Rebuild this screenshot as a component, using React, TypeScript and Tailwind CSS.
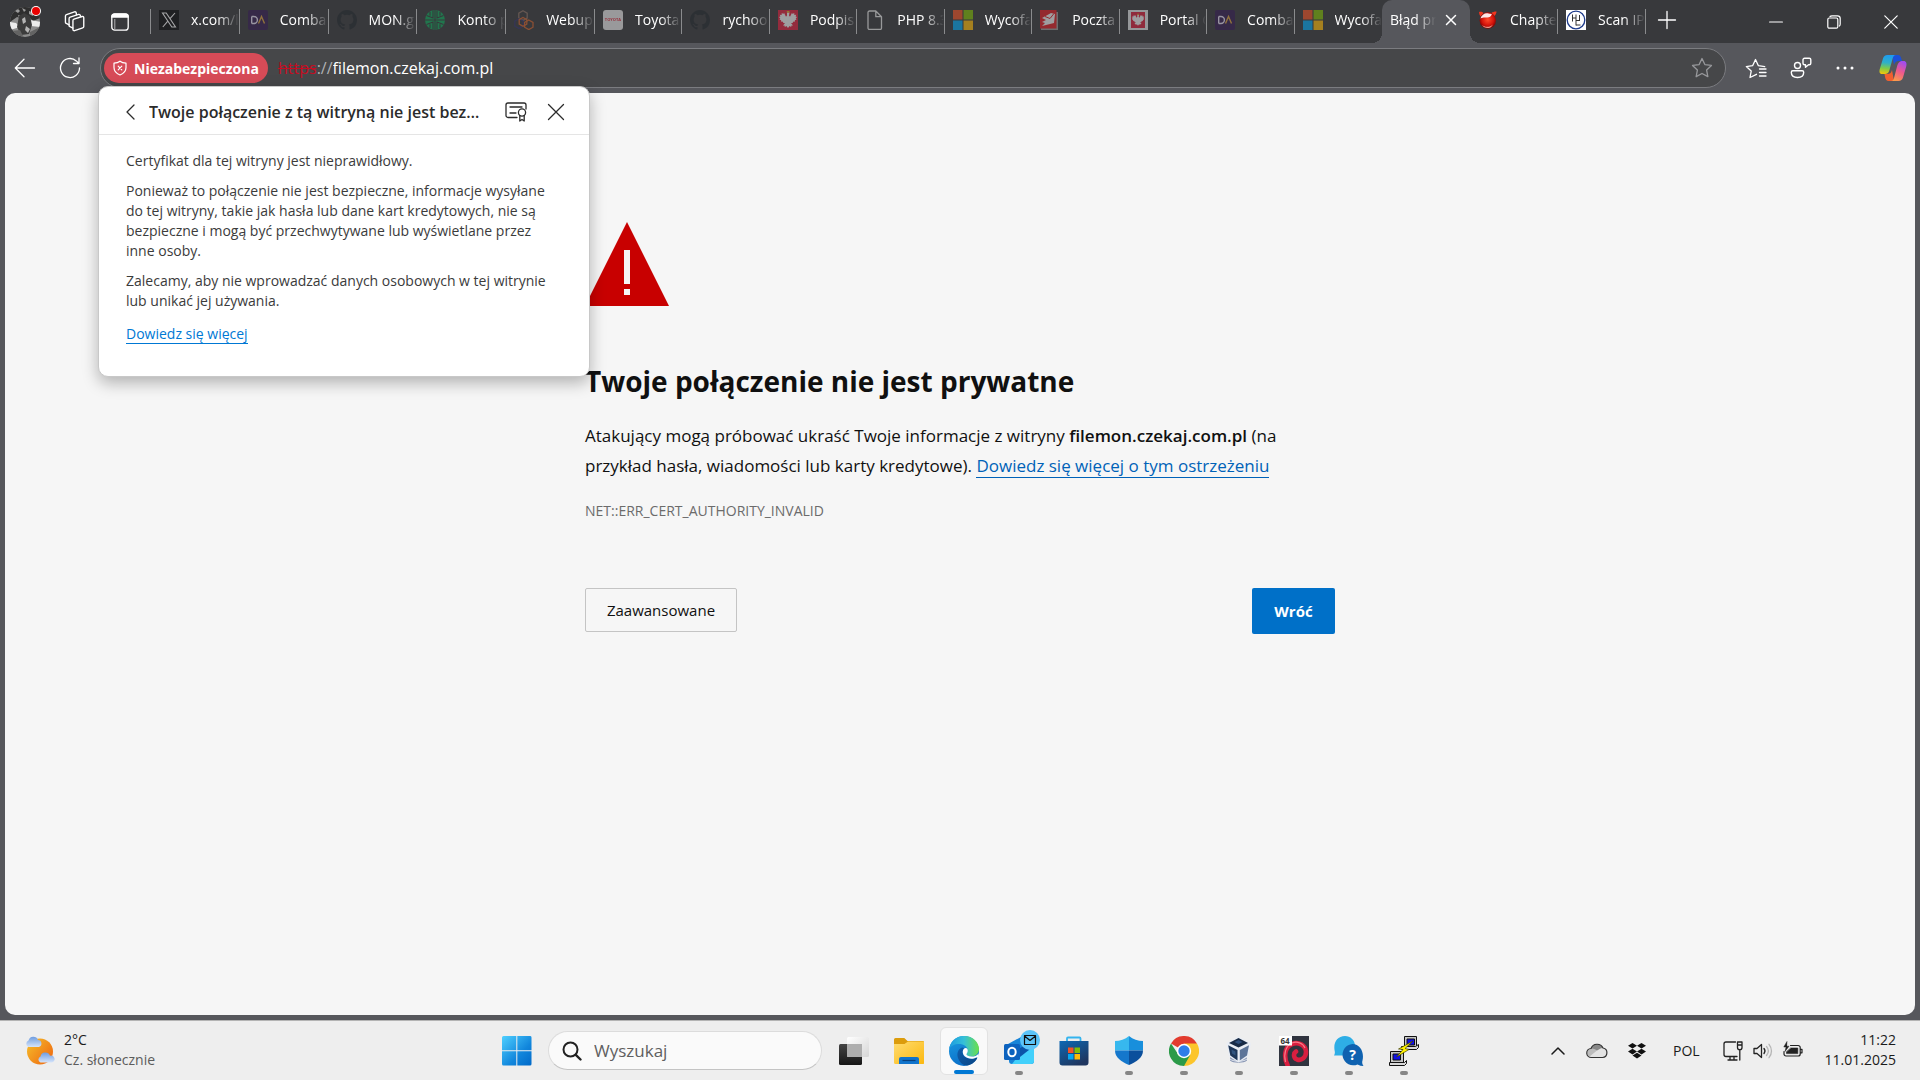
import React from "react";

type TabInfo = { title: string; icon: React.ReactNode; dim?: boolean };

const stroke = { fill: "none", stroke: "currentColor", strokeLinecap: "round", strokeLinejoin: "round" } as const;

/* ---------- Favicons ---------- */

function XIcon() {
  return (
    <svg viewBox="0 0 20 20" className="size-5">
      <rect width="20" height="20" fill="#0c0c0d" />
      <path d="M3.500 3h3.700l9.300 14h-3.700zM16 3 10.800 8.900M8.600 11.300 3.800 17" fill="none" stroke="#fff" strokeWidth="1.100" />
    </svg>
  );
}

function DAIcon() {
  return (
    <svg viewBox="0 0 20 20" className="size-5">
      <rect width="20" height="20" rx="2" fill="#351c52" />
      <path d="M3.700 6.500v7M3.700 6.500h2.200a3.500 3.500 0 0 1 0 7H3.700" fill="none" stroke="#e8e0f5" strokeWidth="1.400" />
      <path d="m10.500 13.500 3-7 3 7" fill="none" stroke="#d9a13e" strokeWidth="1.400" />
    </svg>
  );
}

function GithubIcon() {
  return (
    <svg viewBox="0 0 16 16" className="size-5">
      <path
        fill="#24292f"
        d="M8 0C3.58 0 0 3.58 0 8c0 3.54 2.29 6.53 5.47 7.59.4.07.55-.17.55-.38 0-.19-.01-.82-.01-1.49-2.01.37-2.53-.49-2.69-.94-.09-.23-.48-.94-.82-1.13-.28-.15-.68-.52-.01-.53.63-.01 1.08.58 1.23.82.72 1.21 1.87.87 2.33.66.07-.52.28-.87.51-1.07-1.78-.2-3.64-.89-3.64-3.95 0-.87.31-1.59.82-2.15-.08-.2-.36-1.02.08-2.12 0 0 .67-.21 2.2.82a7.6 7.6 0 0 1 4 0c1.53-1.04 2.2-.82 2.2-.82.44 1.1.16 1.92.08 2.12.51.56.82 1.27.82 2.15 0 3.07-1.87 3.75-3.65 3.95.29.25.54.73.54 1.48 0 1.07-.01 1.93-.01 2.2 0 .21.15.46.55.38A8.01 8.01 0 0 0 16 8c0-4.42-3.58-8-8-8"
      />
    </svg>
  );
}

function GlobeStripesIcon() {
  return (
    <svg viewBox="0 0 20 20" className="size-5">
      <circle cx="10" cy="10" r="10" fill="#0fa85c" />
      <path
        d="M10 0v20M0 10h20M1.500 5.500 8 8V.5M5 2v3.800M18.500 5.500 12 8V.5M15 2v3.800M1.500 14.500 8 12v7.500M5 18v-3.800M18.500 14.500 12 12v7.500M15 18v-3.800"
        fill="none"
        stroke="#38393c"
        strokeWidth="1.100"
      />
    </svg>
  );
}

function HexIcon() {
  return (
    <svg viewBox="0 0 20 20" className="size-5" fill="none" strokeWidth="1.300">
      <path d="m9 .8 4.200 2.400v4.800L9 10.400 4.800 8V3.200z" stroke="#8a7064" />
      <path d="m5 8.800 4.200 2.400v4.800L5 18.400.8 16v-4.800z" stroke="#33336b" />
      <path d="m9 7.500 3.800 2.200v4.400L9 16.300l-3.800-2.200V9.700z" stroke="#d0622c" />
      <path d="m14.800 10 4.200 2.400v4.800l-4.200 2.400-4.200-2.400v-4.800z" stroke="#d0622c" />
    </svg>
  );
}

function ToyotaIcon() {
  return (
    <span className="flex size-5 items-center justify-center rounded-[3px] bg-[#e9e9e9] text-[4px] font-bold text-[#e03045]">
      TOYOTA
    </span>
  );
}

function EagleIcon({ framed }: { framed?: boolean }) {
  return (
    <svg viewBox="0 0 20 20" className="size-5">
      <rect width="20" height="20" fill={framed ? "#e4e6e8" : "#e0213f"} />
      {framed && <rect x="3" y="2" width="14" height="16" fill="#d8203c" />}
      <g transform={framed ? "translate(3 3) scale(.7)" : undefined}>
        <path
          fill="#f2f2f2"
          d="M9 2.500h2.500l-.5 3 1 1.200 2-4 .6 1.400 1.600-1 .2 1.800 1.800-.2-.6 1.800 1.400.4-1.300 1.500.8 1-1.700.9.2 1.300-2 .2-.3 1.300-1.700-.2 2 2.600-1.500.1-.4 1.500-1.500-1-1.600 2-1.600-2-1.500 1-.4-1.500-1.500-.1 2-2.600-1.700.2-.3-1.300-2-.2.2-1.300-1.700-.9.8-1-1.300-1.500 1.400-.4-.6-1.800 1.800.2.200-1.800 1.600 1 .6-1.400 2 4 1-1.200z"
        />
        <path d="M8.800 1h2.600v1.500H8.800z" fill="#e0b020" />
      </g>
    </svg>
  );
}

function FileIcon() {
  return (
    <svg viewBox="0 0 20 20" className="size-5" {...stroke} stroke="#e8e8e8" strokeWidth="1.300">
      <path d="M3 2.500A1.500 1.500 0 0 1 4.500 1h6.300L16.500 6.700V18a1.500 1.500 0 0 1-1.500 1.500H4.500A1.500 1.500 0 0 1 3 18zM10.800 1v5.700h5.700" />
    </svg>
  );
}

function MicrosoftIcon() {
  return (
    <svg viewBox="0 0 20 20" className="size-5">
      <path fill="#f35325" d="M0 0h9.500v9.500H0z" />
      <path fill="#81bc06" d="M10.500 0H20v9.500h-9.500z" />
      <path fill="#05a6f0" d="M0 10.500h9.500V20H0z" />
      <path fill="#ffba08" d="M10.500 10.500H20V20h-9.500z" />
    </svg>
  );
}

function PostIcon() {
  return (
    <svg viewBox="0 0 20 20" className="size-5">
      <path fill="#9a9a9a" d="M3 2h15v18H1v-2z" />
      <path fill="#e01f26" d="M0 0h16.500v18.500H0z" />
      <path fill="#f2f2f2" d="m2 8 9-5 4 1-1 9-12 3 3-3-3-1 4-2z" />
      <path d="m5 6.500 5 2 4-5" stroke="#e01f26" fill="none" />
    </svg>
  );
}

function DevilIcon() {
  return (
    <svg viewBox="0 0 20 20" className="size-5">
      <defs>
        <radialGradient id="devil" cx=".5" cy=".45" r=".6">
          <stop offset="0" stopColor="#ff4a2a" />
          <stop offset=".6" stopColor="#d3120a" />
          <stop offset="1" stopColor="#5c0000" />
        </radialGradient>
      </defs>
      <path d="M1 2c2-.5 3.500 0 4.500 1L2.500 6.500C1.500 5 1 3.500 1 2M18.500 1.500c-2.500 0-4 .5-5 1.500l3 3c1.200-1.500 2-3 2-4.500" fill="#f0361f" />
      <circle cx="9.800" cy="10.500" r="8.200" fill="url(#devil)" />
      <path d="M2.500 8.500c1-3.500 4-5.500 7-5.200 2 .2 3 1 4.500.5-1 3-3 4-5.500 3.700-2.500-.2-4 0-6 1" fill="#fff" opacity=".9" />
      <path d="M4 15c3 2.500 8 2.500 11-.5-1.500 3-3.500 3.500-5.500 3.500S5 17 4 15" fill="#ffb9a8" opacity=".8" />
    </svg>
  );
}

function HeIcon() {
  return (
    <svg viewBox="0 0 20 20" className="size-5">
      <rect width="20" height="20" fill="#fff" />
      <circle cx="10" cy="10" r="8.800" fill="none" stroke="#1d3a8a" strokeWidth="1.300" />
      <path d="M6.500 4.500v7M10 4.500v11M6.500 8h3.500M10 10.500h4M10 15h4.500M13.500 5v5.500" stroke="#333" strokeWidth="1" fill="none" />
    </svg>
  );
}

const firstTabs: TabInfo[] = [
  { title: "x.com/l", icon: <XIcon />, dim: true },
  { title: "Comba", icon: <DAIcon />, dim: true },
  { title: "MON.g", icon: <GithubIcon />, dim: true },
  { title: "Konto p", icon: <GlobeStripesIcon />, dim: true },
  { title: "Webup", icon: <HexIcon />, dim: true },
];

const middleTabs: TabInfo[] = [
  { title: "Toyota", icon: <ToyotaIcon />, dim: true },
  { title: "rychoo", icon: <GithubIcon />, dim: true },
  { title: "Podpis", icon: <EagleIcon />, dim: true },
  { title: "PHP 8.3", icon: <FileIcon />, dim: true },
  { title: "Wycofa", icon: <MicrosoftIcon />, dim: true },
  { title: "Poczta", icon: <PostIcon />, dim: true },
  { title: "Portal G", icon: <EagleIcon framed />, dim: true },
  { title: "Comba", icon: <DAIcon />, dim: true },
  { title: "Wycofa", icon: <MicrosoftIcon />, dim: true },
];

const lastTabs: TabInfo[] = [
  { title: "Chapte", icon: <DevilIcon /> },
  { title: "Scan IP", icon: <HeIcon /> },
];

const fade = "[mask-image:linear-gradient(to_right,#000_55%,transparent)]";

function Tab({ tab, last }: { tab: TabInfo; last?: boolean }) {
  return (
    <button type="button" role="tab" aria-selected="false" className="flex h-[43px] min-w-0 flex-1 items-center pb-[3px] pl-2 text-left">
      <span className={tab.dim ? "shrink-0 opacity-55" : "shrink-0"}>{tab.icon}</span>
      <span className={`ml-3 flex-1 overflow-hidden pb-0.5 text-[14px] whitespace-nowrap text-white ${fade}`}>{tab.title}</span>
      {!last && <span className="mt-[3px] h-[25px] w-px shrink-0 bg-[#8a8b8d]" />}
    </button>
  );
}

function TabStrip() {
  return (
    <header className="flex h-[43px] items-center bg-[#38393c] text-white">
      <button type="button" aria-label="Profil" className="relative ml-2.5 size-8 shrink-0">
        <svg viewBox="0 0 32 32" className="size-8">
          <defs>
            <clipPath id="face"><circle cx="15" cy="16" r="15" /></clipPath>
          </defs>
          <g clipPath="url(#face)">
            <rect width="32" height="32" fill="#8c8c8c" />
            <path d="M0 0h32v11l-9 4-4-4-6 2-6-2-7 5z" fill="#2e2e2e" />
            <path d="M5 5l3-2 2 2-2 2zM12 2l4 2-2 2zM19 5l3 1 1 4-4-2zM8 9l3 1-2 2z" fill="#9b9b9b" />
            <path d="M0 16l6 1 4 4-10 3zM20 14l11 2v5l-10-1z" fill="#ececec" />
            <path d="M9 10l5-3 6 3 2 9-3 9-8 1-4-8z" fill="#3c3c3c" />
            <path d="M12 13l3-2 1 5-3 2zM16 20l4 3-2 4-3-3z" fill="#b5b5b5" />
            <path d="M2 25l8-1 4 8H4zM20 26l10-5-2 9-8 2z" fill="#636363" />
          </g>
          <circle cx="26" cy="5" r="5" fill="#fff" />
          <circle cx="26" cy="5" r="4" fill="#e80000" />
        </svg>
      </button>
      <button type="button" aria-label="Obszary robocze" className="ml-5 flex w-[25px] shrink-0 justify-center">
        <svg viewBox="0 0 24 24" className="size-[25px]" {...stroke} strokeWidth="1.300">
          <path d="M10.500 11.200a1.500 1.500 0 0 1 1-1.400l7.800-2.600a1.200 1.200 0 0 1 1.600 1.100v8.400a1.500 1.500 0 0 1-1 1.400l-7.800 2.700a1.200 1.200 0 0 1-1.600-1.100z" />
          <path d="M10.500 18.300 7.600 17a1.200 1.200 0 0 1-.8-1.200V9.300a1.500 1.500 0 0 1 1-1.400l8.200-2.700a1.200 1.200 0 0 1 1.500.8l.2.900" />
          <path d="m6.800 15.200-2.700-1.300a1.200 1.200 0 0 1-.8-1.200V6.800a1.500 1.500 0 0 1 1-1.400L12 2.700a1.200 1.200 0 0 1 1.600.9l.3 1.800" />
        </svg>
      </button>
      <button type="button" aria-label="Menu akcji kart" className="ml-5 flex w-[25px] shrink-0 justify-center">
        <svg viewBox="0 0 20 20" className="size-5">
          <rect x="1.800" y="1.800" width="16.400" height="16.400" rx="3" fill="none" stroke="#fff" strokeWidth="1.300" />
          <path d="M1.200 4.500a3 3 0 0 1 3-3h11.600a3 3 0 0 1 3 3v1.300H1.200z" fill="#fff" />
          <path d="M4.800 7v10" stroke="#fff" strokeWidth="1" opacity=".6" />
        </svg>
      </button>
      <span className="ml-[18px] h-[25px] w-px shrink-0 bg-[#8a8b8d]" />
      <div role="tablist" className="flex w-[1495px] min-w-0">
        <div className="flex min-w-0 flex-[444]">
          {firstTabs.map((t) => <Tab key={t.title} tab={t} />)}
        </div>
        <div className="flex min-w-0 flex-[787]">
          {middleTabs.map((t, i) => <Tab key={i} tab={t} last={i === middleTabs.length - 1} />)}
        </div>
        <div role="tab" aria-selected="true" className="relative min-w-0 flex-[88] rounded-t-[10px] bg-[#56575c]">
          <span className="absolute bottom-0 -left-2.5 size-2.5 bg-[radial-gradient(circle_at_0_0,transparent_10px,#56575c_10px)]" />
          <span className="absolute -right-2.5 bottom-0 size-2.5 bg-[radial-gradient(circle_at_100%_0,transparent_10px,#56575c_10px)]" />
          <div className="flex h-[43px] items-center pb-[3px] pl-2">
            <span className={`w-[46px] overflow-hidden pb-0.5 text-[14px] whitespace-nowrap ${fade}`}>Błąd pr</span>
            <button type="button" aria-label="Zamknij kartę" className="ml-2">
              <svg viewBox="0 0 14 14" className="size-3.5" {...stroke} strokeWidth="1.500"><path d="m2.500 2.500 9 9m0-9-9 9" /></svg>
            </button>
          </div>
        </div>
        <div className="flex min-w-0 flex-[176]">
          {lastTabs.map((t) => <Tab key={t.title} tab={t} />)}
        </div>
      </div>
      <button type="button" aria-label="Nowa karta" className="ml-[11px] shrink-0">
        <svg viewBox="0 0 20 20" className="mb-[3px] size-5" {...stroke} strokeWidth="1.300"><path d="M10 1.500v17M1.500 10h17" /></svg>
      </button>
      <div className="ml-auto flex shrink-0">
        <button type="button" aria-label="Minimalizuj" className="flex w-[58px] justify-center">
          <svg viewBox="0 0 14 14" className="size-3.5" {...stroke} strokeWidth="1.200"><path d="M.6 7h12.800" /></svg>
        </button>
        <button type="button" aria-label="Przywróć" className="flex w-[57px] justify-center">
          <svg viewBox="0 0 14 14" className="size-3.5" {...stroke} strokeWidth="1.200">
            <rect x=".8" y="3" width="10" height="10.200" rx="1.500" />
            <path d="M3 1.500C3.500.9 4 .8 5 .8h5.500a2.700 2.700 0 0 1 2.700 2.700V9c0 1-.2 1.600-.8 2" />
          </svg>
        </button>
        <button type="button" aria-label="Zamknij" className="flex w-[58px] justify-center">
          <svg viewBox="0 0 14 14" className="size-3.5" {...stroke} strokeWidth="1.200"><path d="m.8.800 12.400 12.400m0-12.400L.8 13.200" /></svg>
        </button>
      </div>
    </header>
  );
}

function Toolbar() {
  return (
    <div className="flex h-[50px] items-center bg-[#56575c] text-white">
      <button type="button" aria-label="Wstecz" className="ml-[14px] shrink-0">
        <svg viewBox="0 0 22 22" className="size-[22px]" {...stroke} strokeWidth="1.300"><path d="M20.500 11H1.500M10 2.300 1.300 11l8.700 8.700" /></svg>
      </button>
      <button type="button" aria-label="Odśwież" className="ml-[23px] shrink-0">
        <svg viewBox="0 0 22 22" className="size-[22px]" {...stroke} strokeWidth="1.300"><path d="M20.500 11a9.500 9.500 0 1 1-3.200-7.100l2.700 2.600M20 1v5.500h-5.500" /></svg>
      </button>
      <div className="ml-[19px] flex h-10 flex-1 items-center rounded-full border border-[#7b7c80] bg-[#464749] pr-3 pl-[3px]">
        <button type="button" className="flex h-[30px] w-[164px] shrink-0 items-center rounded-full bg-[#d64b57] pl-2 text-[14px] font-bold text-white">
          <svg viewBox="0 0 16 16" className="mr-1.5 size-4" {...stroke} strokeWidth="1.200">
            <path d="M8 1.200c1.600 1.300 3.500 1.900 6 2v4.300c0 3.600-2.300 6-6 7.500-3.700-1.500-6-3.900-6-7.500V3.200c2.500-.1 4.400-.7 6-2M6.200 6.200l3.600 3.600m0-3.600L6.200 9.800" />
          </svg>
          Niezabezpieczona
        </button>
        <label htmlFor="address" className="ml-2.5 shrink-0 text-[16px] text-[#b0b1b3]">
          <span className="text-[#c40d22] line-through">https</span>://
        </label>
        <input id="address" readOnly value="filemon.czekaj.com.pl" className="min-w-0 flex-1 bg-transparent text-[16px] text-white outline-none" />
        <button type="button" aria-label="Dodaj do ulubionych" className="shrink-0 text-[#97989b]">
          <svg viewBox="0 0 20 20" className="size-[22px]" {...stroke} strokeWidth="1.200">
            <path d="m10 1.400 2.600 5.500 6 .8-4.400 4.200 1.100 6L10 15l-5.300 2.900 1.100-6L1.400 7.700l6-.8z" />
          </svg>
        </button>
      </div>
      <div className="ml-[19px] flex shrink-0 items-center">
        <button type="button" aria-label="Ulubione" className="mr-[23px]">
          <svg viewBox="0 0 22 22" className="size-[22px]" {...stroke} strokeWidth="1.300">
            <path d="M11.500 17.300 5 20.500l1.200-6.400L1.300 9.600l6.300-.9L10.500 2.500l2.900 6.200 6.300.9M14.500 12h6.500M14.500 15.500h6.500M14.500 19h6.500" />
          </svg>
        </button>
        <button type="button" aria-label="Opinie" className="mr-6">
          <svg viewBox="0 0 22 22" className="size-[22px]" {...stroke} strokeWidth="1.400">
            <circle cx="7.500" cy="8.500" r="3" />
            <path d="M2.800 13.800h9.400a1.500 1.500 0 0 1 1.500 1.500c0 3.600-2.800 5.200-6.200 5.200s-6.200-1.600-6.200-5.200a1.500 1.500 0 0 1 1.500-1.500" />
            <path d="M13 2.800A1.500 1.500 0 0 1 14.500 1.300h4.800a1.500 1.500 0 0 1 1.500 1.500v3.400a1.500 1.500 0 0 1-1.500 1.500h-.8l-3 2.500V7.700h-1A1.500 1.500 0 0 1 13 6.200z" />
          </svg>
        </button>
        <button type="button" aria-label="Ustawienia i nie tylko" className="mr-[25px]">
          <svg viewBox="0 0 18 18" className="size-[18px]" fill="#fff"><circle cx="2" cy="9" r="1.500" /><circle cx="9" cy="9" r="1.500" /><circle cx="16" cy="9" r="1.500" /></svg>
        </button>
        <button type="button" aria-label="Copilot" className="mr-[13px]">
          <CopilotIcon />
        </button>
      </div>
    </div>
  );
}

function CopilotIcon() {
  return (
    <svg viewBox="0 0 28 28" className="size-7">
      <defs>
        <linearGradient id="cpA" x1=".4" y1="0" x2=".3" y2="1">
          <stop offset="0" stopColor="#1e9bf0" />
          <stop offset=".4" stopColor="#2fb0c8" />
          <stop offset=".7" stopColor="#7fcb48" />
          <stop offset="1" stopColor="#f4c60a" />
        </linearGradient>
        <linearGradient id="cpB" x1=".7" y1="0" x2=".3" y2="1">
          <stop offset="0" stopColor="#a04cf0" />
          <stop offset=".5" stopColor="#ef5a8c" />
          <stop offset="1" stopColor="#fb9c4a" />
        </linearGradient>
      </defs>
      <path d="M13 1h6c2 0 2.600 1.500 3.200 3.300L23 7h-3c-3 0-4 1-5 4z" fill="#1c50d8" />
      <path d="M15 27H9.500c-2 0-2.800-1.500-3.300-3.200L5.500 20H8c3 0 4-1 5-4z" fill="#f2602f" />
      <path d="M8.500 1H17c-2 0-2.800 1.500-3.500 4l-3.200 11.500C9.500 19.300 8 20 6 20H3.500C.6 20 0 18 .8 15L4 4.500C4.700 2.200 6 1 8.500 1" fill="url(#cpA)" />
      <path d="M19.500 27H12c2 0 2.600-1.500 3.300-4l3-11.500C19.100 8.700 20.500 7.500 22.500 7h2c2.900 0 3.500 2.500 2.700 5.500L24 23.500c-.7 2.300-2 3.500-4.500 3.500" fill="url(#cpB)" />
    </svg>
  );
}

/* ---------- Site information flyout ---------- */

function SecurityFlyout() {
  return (
    <section role="dialog" aria-labelledby="flyout-title" className="absolute -top-[7px] left-[98px] z-10 w-[492px] rounded-[10px] border border-[#c8c8c8] bg-white pb-8 text-[14px] leading-5 text-[#3b3b3b] shadow-[0_6px_16px_rgba(0,0,0,0.28)]">
      <div className="flex h-12 items-center border-b border-[#e5e5e5] pt-0.5 pl-[26px] text-[#2b2b2b]">
        <button type="button" aria-label="Wstecz" className="shrink-0">
          <svg viewBox="0 0 12 18" className="h-[18px] w-3" {...stroke} strokeWidth="1.300"><path d="M9 2 2 9l7 7" /></svg>
        </button>
        <h2 id="flyout-title" className="ml-3 w-[338px] truncate text-[16px] leading-6 font-semibold">Twoje połączenie z tą witryną nie jest bezpieczne</h2>
        <button type="button" aria-label="Pokaż certyfikat" className="ml-[18px] shrink-0">
          <svg viewBox="0 0 22 20" className="h-5 w-[22px]" {...stroke} strokeWidth="1.300">
            <path d="M12 15.500H3A2 2 0 0 1 1 13.500V3a2 2 0 0 1 2-2h16a2 2 0 0 1 2 2v4M5 5h12M5 11h6" />
            <circle cx="17" cy="10.500" r="3.600" />
            <path d="M14.800 13.500V19l2.200-1.500 2.200 1.500v-5.500" />
          </svg>
        </button>
        <button type="button" aria-label="Zamknij" className="ml-5 shrink-0">
          <svg viewBox="0 0 18 18" className="size-[18px]" {...stroke} strokeWidth="1.300"><path d="m1.500 1.500 15 15m0-15-15 15" /></svg>
        </button>
      </div>
      <div className="flex flex-col items-start gap-2.5 px-[27px] pt-4">
        <p>Certyfikat dla tej witryny jest nieprawidłowy.</p>
        <p>
          Ponieważ to połączenie nie jest bezpieczne, informacje wysyłane<br />
          do tej witryny, takie jak hasła lub dane kart kredytowych, nie są<br />
          bezpieczne i mogą być przechwytywane lub wyświetlane przez<br />
          inne osoby.
        </p>
        <p>
          Zalecamy, aby nie wprowadzać danych osobowych w tej witrynie<br />
          lub unikać jej używania.
        </p>
        <a href="#wiecej" className="mt-[3px] border-b border-[#0078d4] leading-[19px] text-[#0078d4]">Dowiedz się więcej</a>
      </div>
    </section>
  );
}

function ErrorPage() {
  return (
    <main className="mx-[5px] mb-[5px] flex-1 rounded-[10px] bg-[#f6f6f6]">
      <div className="mx-auto max-w-[750px] pt-[129px] text-[#101010]">
        <svg viewBox="0 0 84 84" className="size-[84px]" role="img" aria-label="Ostrzeżenie">
          <path d="m42 0 42 84H0z" fill="#c80000" />
          <path d="M39 28h6v34h-6zM39 67h6v6h-6z" fill="#f6f6f6" />
        </svg>
        <h1 className="mt-[55px] text-[28px] leading-10 font-bold">Twoje połączenie nie jest prywatne</h1>
        <p className="mt-5 text-[17px] leading-[30px]">
          Atakujący mogą próbować ukraść Twoje informacje z witryny <strong className="font-semibold">filemon.czekaj.com.pl</strong> (na<br />
          przykład hasła, wiadomości lub karty kredytowe).{" "}
          <a href="#ostrzezenie" className="border-b border-[#0062b8] text-[#0062b8]">Dowiedz się więcej o tym ostrzeżeniu</a>
        </p>
        <p className="mt-5 text-[14px] leading-5 text-[#6b6b6b]">NET::ERR_CERT_AUTHORITY_INVALID</p>
        <div className="mt-[67px] flex items-start justify-between">
          <button type="button" className="h-11 w-[152px] rounded-[2px] border border-[#c4c4c4] text-[15px]">Zaawansowane</button>
          <button type="button" className="h-[46px] w-[83px] rounded-[2px] bg-[#0070c8] text-[15px] font-bold text-white">Wróć</button>
        </div>
      </div>
    </main>
  );
}

/* ---------- Taskbar ---------- */

function WeatherIcon() {
  return (
    <svg viewBox="0 0 30 30" className="size-[30px]">
      <defs>
        <linearGradient id="sun" x1="0" y1="0" x2="1" y2=".8"><stop offset="0" stopColor="#f5c12c" /><stop offset="1" stopColor="#ef6a10" /></linearGradient>
        <linearGradient id="cloud" x1="0" y1="0" x2="0" y2="1"><stop offset="0" stopColor="#6f9de0" /><stop offset="1" stopColor="#d5e4fb" /></linearGradient>
      </defs>
      <circle cx="15" cy="15.500" r="13" fill="url(#sun)" />
      <path d="M3.500 11a3.500 3.500 0 0 1 0-6.500A5 5 0 0 1 13 4a3.600 3.600 0 0 1 1 7z" fill="url(#cloud)" />
      <path d="M15.500 26.500a3.200 3.200 0 0 1 0-6 5 5 0 0 1 9.500-.8 3.400 3.400 0 0 1 2 6.800z" fill="url(#cloud)" />
    </svg>
  );
}

function StartIcon() {
  return (
    <svg viewBox="0 0 30 30" className="size-[30px]">
      <defs><linearGradient id="win" gradientUnits="userSpaceOnUse" x1="0" y1="0" x2="30" y2="30"><stop offset="0" stopColor="#4fd0ff" /><stop offset=".6" stopColor="#1186dc" /><stop offset="1" stopColor="#0068c8" /></linearGradient></defs>
      <path d="M0 1.500A1.500 1.500 0 0 1 1.500 0h12.800v14.300H0zM15.300 0h12.700A1.500 1.500 0 0 1 29.500 1.500v12.800H15.300zM0 15.300h14.300v14.200H1.500A1.500 1.500 0 0 1 0 28zM15.300 15.300h14.200V28a1.500 1.500 0 0 1-1.500 1.500H15.300z" fill="url(#win)" />
    </svg>
  );
}

function TaskViewIcon() {
  return (
    <svg viewBox="0 0 30 30" className="size-[30px]">
      <defs>
        <linearGradient id="tvd" x1="0" y1="0" x2="0" y2="1"><stop offset="0" stopColor="#444" /><stop offset="1" stopColor="#161616" /></linearGradient>
        <linearGradient id="tvl" x1="0" y1="0" x2="1" y2="1"><stop offset="0" stopColor="#fff" /><stop offset="1" stopColor="#d6d6d6" /></linearGradient>
      </defs>
      <rect y="8" width="23" height="21" rx="1.500" fill="url(#tvd)" />
      <rect x="8" y="1" width="22" height="20" rx="1.500" fill="url(#tvl)" />
      <path d="M8 8h15v13H9.500A1.500 1.500 0 0 1 8 19.500z" fill="#aeaeae" />
    </svg>
  );
}

function FolderIcon() {
  return (
    <svg viewBox="0 0 30 30" className="size-[30px]">
      <defs><linearGradient id="fold" x1="0" y1="0" x2="1" y2="1"><stop offset="0" stopColor="#ffdc70" /><stop offset="1" stopColor="#fbb80f" /></linearGradient></defs>
      <path d="M0 3.500A1.500 1.500 0 0 1 1.500 2h8.800L13.500 5H29a1 1 0 0 1 1 1v8H0z" fill="#dc9c0c" />
      <path d="M0 8h10.500L14 5.500h16v22A1.500 1.500 0 0 1 28.500 28h-27A1.500 1.500 0 0 1 0 26.500z" fill="url(#fold)" />
      <path d="M5 28v-5a2 2 0 0 1 2-2h16a2 2 0 0 1 2 2v5z" fill="#1074cc" />
      <path d="M8.500 24.500h13" stroke="#07407e" strokeWidth="1.200" />
    </svg>
  );
}

function EdgeIcon() {
  return (
    <svg viewBox="0 0 30 30" className="size-[30px]">
      <defs>
        <linearGradient id="edA" x1="0" y1=".3" x2="1" y2=".3"><stop offset="0" stopColor="#1c9ae0" /><stop offset=".5" stopColor="#35c0d8" /><stop offset="1" stopColor="#6be04a" /></linearGradient>
        <linearGradient id="edB" x1="0" y1="0" x2=".4" y2="1"><stop offset="0" stopColor="#1b9de2" /><stop offset="1" stopColor="#0b6fc8" /></linearGradient>
        <linearGradient id="edC" x1="0" y1="0" x2="1" y2="1"><stop offset="0" stopColor="#0f5fae" /><stop offset="1" stopColor="#0a4584" /></linearGradient>
      </defs>
      <circle cx="15" cy="15" r="15" fill="url(#edB)" />
      <path d="M0 13.500C.8 5.800 7 0 15 0c9 0 15 6.300 15 13 0 4.500-3.500 7.500-7.500 7.500-3 0-5-1-5-2.200 0-1 1.300-1.500 1.300-3.600C18.800 10.500 14.500 8 10 8 5.500 8 1.500 10 0 13.500" fill="url(#edA)" />
      <path d="M13 11.500c-4 1.500-5.500 6-4 10.500 1.600 4.500 5 7.500 9 7.500 4.500-.6 8.300-3.300 10-7.200.3-.7-.3-1-.8-.7-2.500 1.400-7 1.700-10.500-.3S13 16 15 12.500c-.5-.8-1.200-1-2-1" fill="url(#edC)" />
      <path d="M18.800 14.700c0-2.600-2-3.500-3.600-2.200-1.900 1.500-2 5.200.5 7.800 2.700 2.700 8 3.400 11.600 1.300.8-.4 1.200.2.700.9l1.700-2.500-.2-2.600c-1.500 2.300-4.200 3.100-7 3.100s-5-1-5-2.200c0-1 1.300-1.500 1.300-3.600" fill="#fff" />
    </svg>
  );
}

function OutlookIcon() {
  return (
    <svg viewBox="0 0 30 30" className="size-[30px] overflow-visible">
      <path d="M4 8 17 1l8 5 5 4v15a3 3 0 0 1-3 3H8a3 3 0 0 1-3-3z" fill="#1784d8" />
      <path d="M15 19 30 10v15a3 3 0 0 1-3 3H8z" fill="#42d0fb" />
      <path d="m12 14 16-8 2 4-14 11z" fill="#0b54a8" />
      <rect y="8" width="16" height="16" rx="1.500" fill="#0c62be" />
      <ellipse cx="8" cy="16" rx="3.700" ry="4.200" fill="none" stroke="#fff" strokeWidth="2" />
      <circle cx="26" cy="4" r="10" fill="#5bc4f8" />
      <path d="M20.500-.5h11v9h-11zM20.500 0l5.500 4.500L31.500 0" fill="none" stroke="#101010" strokeWidth="1.200" strokeLinejoin="round" />
    </svg>
  );
}

function StoreIcon() {
  return (
    <svg viewBox="0 0 30 30" className="size-[30px]">
      <defs><linearGradient id="store" x1="0" y1="0" x2=".6" y2="1"><stop offset="0" stopColor="#0c68b4" /><stop offset="1" stopColor="#1f365f" /></linearGradient></defs>
      <path d="M8 6V2.500a1 1 0 0 1 1-1h11.500a1 1 0 0 1 1 1V6" fill="none" stroke="#34b4ee" strokeWidth="1.800" />
      <path d="M.5 5h29v21.500A3 3 0 0 1 26.500 29.500h-23A3 3 0 0 1 .5 26.500z" fill="url(#store)" />
      <path fill="#f35325" d="M9 11.500h5.500V17H9z" /><path fill="#81bc06" d="M15.500 11.500H21V17h-5.500z" />
      <path fill="#05a6f0" d="M9 18h5.500v5.500H9z" /><path fill="#ffba08" d="M15.500 18H21v5.500h-5.500z" />
    </svg>
  );
}

function DefenderIcon() {
  return (
    <svg viewBox="0 0 30 30" className="size-[30px]">
      <path d="M15 0v14.500H1V5C6 5 11 3.500 15 0" fill="#37b8ee" />
      <path d="M15 0v14.500h14V5C24 5 19 3.500 15 0" fill="#188fdc" />
      <path d="M1 14.500h14V29C7 25.500 1 21.500 1 14.500" fill="#1577cc" />
      <path d="M29 14.500H15V29c8-3.500 14-7.500 14-14.500" fill="#0b4f9c" />
    </svg>
  );
}

function ChromeIcon() {
  return (
    <svg viewBox="0 0 30 30" className="size-[30px]">
      <path d="M15 15 2 7.500A15 15 0 0 1 28 7.500z" fill="#e23b2e" />
      <path d="M28 7.500A15 15 0 0 1 15 30l-2-2 8-13-6-7.500z" fill="#fcc52b" />
      <path d="M2 7.500A15 15 0 0 0 15 30l6.200-11L9 18z" fill="#2b9a48" />
      <circle cx="15" cy="15" r="7.200" fill="#fff" />
      <circle cx="15" cy="15" r="5.700" fill="#2f7de9" />
    </svg>
  );
}

function VirtualBoxIcon() {
  return (
    <svg viewBox="0 0 30 30" className="size-[30px]">
      <path d="M6 20v4.500c3 3 14 3 17 0V20z" fill="#8795b3" />
      <path d="M6 23c4 3 13 3 17 0" fill="none" stroke="#e4e9f1" />
      <path d="M14.500.5 27 7l-2.500 13.500-10 6-9.500-6L2.500 7z" fill="#e9edf4" />
      <path d="m14.500 2 9.500 5-9.500 4.500L5 7z" fill="#172a45" />
      <path d="M4.200 9.200 13.500 14v10.500l-7.200-5z" fill="#1d3658" />
      <path d="M25 9.200 15.800 14v10.500l7.200-5z" fill="#5d7599" />
      <path d="m7.500 13.500 4 2v4l-3.500-2z" fill="#31547f" />
      <path d="m14.500 4 4 2-4 2-4-2z" fill="#2f4f7c" />
    </svg>
  );
}

function SpiralIcon() {
  return (
    <svg viewBox="0 0 30 30" className="size-[30px]">
      <rect width="30" height="30" fill="#30343f" />
      <path d="M8.500 29C4.500 21 5.500 11 13 8c6.500-2.500 13.500 1 14 7.500.3 6-4.500 9.500-9 8-3.500-1.500-4-6-1-8" fill="none" stroke="#d91f40" strokeWidth="4.600" strokeLinecap="round" />
      <path d="M6.500 26c-2-8 0-16 6.500-19 5-2 11 0 13 5" fill="none" stroke="#f77a88" strokeWidth="1.200" />
      <rect width="13" height="9.500" fill="#fff" />
      <text x="1.500" y="7.800" fontSize="8" fontWeight="700" fill="#333">64</text>
    </svg>
  );
}

function HelpIcon() {
  return (
    <svg viewBox="0 0 30 30" className="size-[30px]">
      <path d="M0 19.500c1-1.500 1-3 .7-4.500C-1 7 3 0 11 0c5.500 0 9.500 4 10 9L10 19.500H4z" fill="#2eaee6" />
      <path d="M29.500 30c-1.500-2-1.500-4-1-5.500C30.500 16 26 8 18.500 8a10.700 10.700 0 1 0 5 20.500c2 1 4 1.500 6 1.500" fill="#0f62b0" />
      <text x="18.500" y="24" fontSize="14" fontWeight="700" fill="#fff" textAnchor="middle">?</text>
    </svg>
  );
}

function PuttyIcon() {
  return (
    <svg viewBox="0 0 30 30" className="size-[30px]">
      <g stroke="#111" strokeWidth="1">
        <path d="M15.500.5h12v11h-12zM1.500 15.500h13v11h-13z" fill="#c6c6c6" />
        <path d="M18 3h7.500v6H18zM4 18h7.500v6H4z" fill="#1010e8" />
        <path d="M.5 26.500h15l2-2v3l-2 2H.5zM12.500 10.500h14l3-2v3l-2 2h-15z" fill="#d8d8d8" />
      </g>
      <path d="M24 5 9.500 13l4.500.500L7.500 21 20 13.500l-4-1z" fill="#fff200" stroke="#3d3d00" strokeWidth=".7" />
    </svg>
  );
}

const apps: { name: string; icon: React.ReactNode; running?: boolean; active?: boolean }[] = [
  { name: "Widok zadań", icon: <TaskViewIcon /> },
  { name: "Eksplorator plików", icon: <FolderIcon /> },
  { name: "Microsoft Edge", icon: <EdgeIcon />, active: true },
  { name: "Outlook", icon: <OutlookIcon />, running: true },
  { name: "Microsoft Store", icon: <StoreIcon /> },
  { name: "Zabezpieczenia", icon: <DefenderIcon />, running: true },
  { name: "Google Chrome", icon: <ChromeIcon />, running: true },
  { name: "VirtualBox", icon: <VirtualBoxIcon />, running: true },
  { name: "Debian 64", icon: <SpiralIcon />, running: true },
  { name: "Pomoc", icon: <HelpIcon />, running: true },
  { name: "PuTTY", icon: <PuttyIcon />, running: true },
];

function Taskbar() {
  return (
    <footer className="grid h-[60px] grid-cols-[1fr_auto_1fr] items-center border-t border-[#b4b4b4] bg-[#eeeeee] text-[14px] leading-5 text-[#1b1b1b]">
      <button type="button" className="flex items-center gap-[9px] pl-[25px] text-left">
        <WeatherIcon />
        <span className="pb-0.5">
          <span className="block">2°C</span>
          <span className="block text-[#5c5c5c]">Cz. słonecznie</span>
        </span>
      </button>
      <nav aria-label="Pasek zadań" className="flex items-center">
        <button type="button" aria-label="Start" className="flex w-[55px] justify-center"><StartIcon /></button>
        <label className="mx-1 flex h-[39px] w-[274px] items-center rounded-full border border-[#dcdcdc] border-b-[#c4c4c4] bg-[#fafafa] pl-[13px]">
          <svg viewBox="0 0 20 20" className="size-5 shrink-0 text-[#222]" {...stroke} strokeWidth="2"><circle cx="8.500" cy="8.500" r="7" /><path d="m13.800 13.800 4.700 4.700" strokeWidth="2.400" /></svg>
          <input type="search" placeholder="Wyszukaj" aria-label="Wyszukaj" className="ml-3 w-full min-w-0 bg-transparent text-[17px] outline-none placeholder:text-[#5f5f5f]" />
        </label>
        {apps.map((app) => (
          <button key={app.name} type="button" aria-label={app.name} className="flex w-[55px] justify-center">
            <span className={app.active ? "relative flex size-12 items-center justify-center rounded-md border border-[#e2e2e2] bg-[#f9f9f9]" : "relative flex size-12 items-center justify-center"}>
              {app.icon}
              {app.active && <span className="absolute bottom-0 left-[13px] h-1 w-5 rounded-full bg-[#0078d4]" />}
              {app.running && <span className="absolute bottom-0 left-5 h-1 w-2 rounded-full bg-[#868686]" />}
            </span>
          </button>
        ))}
      </nav>
      <div className="flex items-center justify-end pr-6">
        <button type="button" aria-label="Pokaż ukryte ikony" className="mr-[21px]">
          <svg viewBox="0 0 14 14" className="size-3.5" {...stroke} strokeWidth="1.500"><path d="m1 10 6-6 6 6" /></svg>
        </button>
        <button type="button" aria-label="OneDrive" className="mr-5">
          <svg viewBox="0 0 22 16" className="h-4 w-[22px]">
            <path d="M5.500 14.500a4.500 4.500 0 0 1-.5-9 6.500 6.500 0 0 1 12-.5 4.800 4.800 0 0 1-.5 9.500z" fill="#e3e3e3" />
            <path d="M5 5.500C7 5 9 6 11 7.500L3 14C.5 11 .5 6 5 5.500" fill="#bcbcbc" /><path d="M5 5.500a6.500 6.500 0 0 1 12-.5c-3 0-4 1.500-6 2.500C9 6 7 5.300 5 5.500" fill="#888" />
            <path d="M5.500 14.500a4.500 4.500 0 0 1-.5-9 6.500 6.500 0 0 1 12-.5 4.800 4.800 0 0 1-.5 9.500z" fill="none" stroke="#333" strokeWidth="1.200" />
          </svg>
        </button>
        <button type="button" aria-label="Dropbox" className="mr-[27px]">
          <svg viewBox="0 0 18 16" className="h-4 w-[18px]" fill="#111">
            <path d="M4.500 0 9 2.800 4.500 5.600 0 2.800zM13.500 0 18 2.800l-4.500 2.800L9 2.800zM4.500 5.800 9 8.600l-4.500 2.800L0 8.600zM13.500 5.800 18 8.600l-4.500 2.800L9 8.600zM4.500 12.600 9 9.800l4.500 2.800L9 15.600z" />
          </svg>
        </button>
        <button type="button" className="mr-[23px] text-[14px]">POL</button>
        <button type="button" aria-label="Sieć, głośność i bateria" className="mr-[22px] flex items-center gap-2.5 text-[#222]">
          <svg viewBox="0 0 20 20" className="size-5" {...stroke} strokeWidth="1.300">
            <path d="M12.500 1H3a2 2 0 0 0-2 2v10.500a2 2 0 0 0 2 2h11M7 15.500V19m4-3.500V19m-6 0h9M14.500 1h4.500v5.500a2.200 2.200 0 0 1-4.500 0zM16.800 8.700V19M14.500 4H19" />
          </svg>
          <svg viewBox="0 0 20 20" className="size-5" {...stroke} strokeWidth="1.300">
            <path d="M1 7.500h3L8.500 3.500v13L4 12.500H1zM11 7.500c1.200 1.500 1.200 3.500 0 5" />
            <path d="M13.500 5.500c2.300 2.700 2.300 6.300 0 9M16 3.300c3.300 4 3.300 9.400 0 13.400" stroke="#b5b5b5" />
          </svg>
          <svg viewBox="0 0 20 20" className="size-5" {...stroke} strokeWidth="1.200">
            <path d="M7.500 4.500h7.700a2 2 0 0 1 2 2V13a2 2 0 0 1-2 2H3a2 2 0 0 1-2-2v-2.500M18 8.300h1v3.500h-1" />
            <path d="M8 7h6.800v5.600H3.500V11z" fill="currentColor" strokeWidth=".6" />
            <path d="M3.800.8.8 6h2.300L2 10.500l4-5.300H4z" fill="currentColor" strokeWidth=".5" />
          </svg>
        </button>
        <time className="pb-0.5 text-right">11:22<br />11.01.2025</time>
      </div>
    </footer>
  );
}

export default function App() {
  return (
    <div className="flex min-h-screen flex-col overflow-hidden bg-[#56575c] font-['Open_Sans','Noto_Sans',sans-serif]">
      <TabStrip />
      <Toolbar />
      <div className="relative flex flex-1 flex-col">
        <SecurityFlyout />
        <ErrorPage />
      </div>
      <Taskbar />
    </div>
  );
}
